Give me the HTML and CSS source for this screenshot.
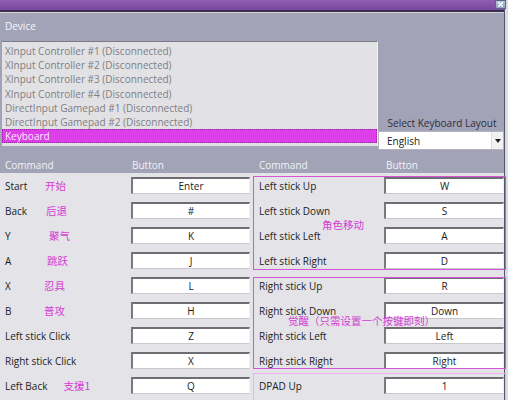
FILE: index.html
```html
<!DOCTYPE html>
<html>
<head>
<meta charset="utf-8">
<title>Controller Settings</title>
<link rel="stylesheet" href="styles.css">
</head>
<body>
<div class="app">
  <div class="titlebar">
    <span class="close">
      <svg width="10" height="9" viewBox="0 0 10 9"><path d="M2.5 2 L7.5 7 M7.5 2 L2.5 7" stroke="#ffffff" stroke-width="1.4" fill="none"/></svg>
    </span>
  </div>
  <div class="device-head">Device</div>
  <div class="device-row">
    <div class="listbox">
      <div class="item">XInput Controller #1 (Disconnected)</div>
      <div class="item">XInput Controller #2 (Disconnected)</div>
      <div class="item">XInput Controller #3 (Disconnected)</div>
      <div class="item">XInput Controller #4 (Disconnected)</div>
      <div class="item">DirectInput Gamepad #1 (Disconnected)</div>
      <div class="item">DirectInput Gamepad #2 (Disconnected)</div>
      <div class="item selected">Keyboard</div>
    </div>
    <div class="layout-panel">
      <div class="layout-label">Select Keyboard Layout</div>
      <div class="select"><span class="select-value">English</span><span class="arrow"><span class="tri"></span></span></div>
    </div>
  </div>
  <div class="grid-head">
    <div class="head-half left-half"><span class="hc">Command</span><span class="hb">Button</span></div>
    <div class="head-half right-half"><span class="hc">Command</span><span class="hb">Button</span></div>
  </div>
  <div class="grid">
    <div class="col col-left">
      <div class="row"><div class="cmd"><span class="name">Start</span><span class="note">开始</span></div><div class="key">Enter</div></div>
      <div class="row"><div class="cmd"><span class="name">Back</span><span class="note n-back">后退</span></div><div class="key">#</div></div>
      <div class="row"><div class="cmd"><span class="name">Y</span><span class="note n-y">聚气</span></div><div class="key">K</div></div>
      <div class="row"><div class="cmd"><span class="name">A</span><span class="note n-a">跳跃</span></div><div class="key">J</div></div>
      <div class="row"><div class="cmd"><span class="name">X</span><span class="note n-x">忍具</span></div><div class="key">L</div></div>
      <div class="row"><div class="cmd"><span class="name">B</span><span class="note n-x">普攻</span></div><div class="key">H</div></div>
      <div class="row"><div class="cmd"><span class="name">Left stick Click</span></div><div class="key">Z</div></div>
      <div class="row"><div class="cmd"><span class="name">Right stick Click</span></div><div class="key">X</div></div>
      <div class="row"><div class="cmd"><span class="name">Left Back</span><span class="note n-lb">支援1</span></div><div class="key">Q</div></div>
    </div>
    <div class="col col-right">
      <div class="group g1">
        <div class="row"><div class="cmd">Left stick Up</div><div class="key">W</div></div>
        <div class="row"><div class="cmd">Left stick Down</div><div class="key">S</div></div>
        <div class="row"><div class="cmd">Left stick Left</div><div class="key">A</div></div>
        <div class="row"><div class="cmd">Left stick Right</div><div class="key">D</div></div>
        <span class="gnote gn1">角色移动</span>
      </div>
      <div class="group g2">
        <div class="row"><div class="cmd">Right stick Up</div><div class="key">R</div></div>
        <div class="row"><div class="cmd">Right stick Down</div><div class="key">Down</div></div>
        <div class="row"><div class="cmd">Right stick Left</div><div class="key">Left</div></div>
        <div class="row"><div class="cmd">Right stick Right</div><div class="key">Right</div></div>
        <span class="gnote gn2">觉醒（只需设置一个按键即刻）</span>
      </div>
      <div class="group g3">
        <div class="row"><div class="cmd">DPAD Up</div><div class="key">1</div></div>
      </div>
    </div>
  </div>
</div>
</body>
</html>
```

FILE: styles.css
```css
* { box-sizing: border-box; }
html, body { margin: 0; padding: 0; }
body {
  width: 508px;
  height: 400px;
  overflow: hidden;
  background: #dcdce4;
  font-family: "Open Sans", "Noto Sans CJK SC", sans-serif;
  font-size: 10px;
}
.app {
  width: 505px;
  height: 400px;
  background: #a3a3b7;
  border-right: 1px solid #55556a;
}
.titlebar {
  height: 12px;
  background: linear-gradient(#9160b3, #7747a0);
  border-bottom: 2px solid #3b2e4e;
  display: flex;
  justify-content: flex-end;
  align-items: flex-start;
}
.close {
  width: 11px;
  height: 9px;
  margin-right: -2px;
  background: linear-gradient(#b8c8de, #8ea2c2);
  border: 1px solid #5a6684;
  display: flex;
  align-items: center;
  justify-content: center;
}
.close svg { display: block; }
.device-head {
  border-top: 1px solid #d2d2dc;
  padding: 6px 5px 8px;
  line-height: 14px;
  color: #f6f6fa;
}
.device-row {
  display: flex;
  align-items: flex-start;
}
.listbox {
  margin-left: 2px;
  width: 376px;
  background: #e2e2e5;
  border-top: 1px solid #7c7c88;
  border-right: 1px solid #f4f4f6;
  padding: 2px 0 3px;
}
.item {
  height: 14.2px;
  line-height: 14.2px;
  padding-left: 3px;
  color: #7e7e84;
  white-space: nowrap;
}
.item.selected {
  background: #dc3fe7;
  color: #fbeafb;
  outline: 1px dotted #9a1eaa;
  outline-offset: -1px;
}
.layout-panel {
  flex: 1;
  padding-top: 75px;
  text-align: center;
}
.layout-label {
  line-height: 14px;
  color: #2e2e3a;
  padding-left: 2px;
}
.select {
  margin-top: 1px;
  height: 19px;
  background: #ffffff;
  border: 1px solid #b4b4bc;
  display: flex;
  align-items: center;
  text-align: left;
  color: #1c1c1c;
}
.select-value { padding-left: 8px; }
.arrow {
  margin-left: auto;
  width: 12px;
  height: 17px;
  background: #f2f2f2;
  border-left: 1px solid #dcdcdc;
  display: flex;
  align-items: center;
  justify-content: center;
}
.tri {
  width: 0;
  height: 0;
  border-left: 3px solid transparent;
  border-right: 3px solid transparent;
  border-top: 4px solid #1e1e1e;
}
.grid-head {
  display: flex;
  height: 23px;
  padding-top: 8px;
  line-height: 14px;
  color: #f2f2f6;
}
.head-half { display: flex; }
.head-half.left-half { width: 251px; }
.head-half.left-half .hc { width: 131px; padding-left: 5px; }
.head-half.left-half .hb { padding-left: 1px; }
.head-half.right-half { width: 253px; }
.head-half.right-half .hc { width: 133px; padding-left: 8px; }
.head-half.right-half .hb { padding-left: 2px; }
.grid {
  display: flex;
  height: 227px;
  background: #e4e4e8;
}
.col-left { width: 251px; }
.col-right { width: 253px; }
.row {
  display: flex;
  align-items: center;
  height: 25px;
}
.cmd {
  display: flex;
  align-items: center;
  color: #1c1c1c;
  white-space: nowrap;
}
.col-left .cmd { width: 131px; padding-left: 5px; }
.col-right .cmd { width: 133px; padding-left: 8px; }
.name { min-width: 40px; }
.note {
  color: #d23cd2;
  font-family: "Noto Sans CJK SC", sans-serif;
  font-size: 10.5px;
  line-height: 12px;
}
.note.n-back { margin-left: 1px; }
.note.n-y { margin-left: 4px; }
.note.n-a { margin-left: 2px; }
.note.n-x { margin-left: -1px; }
.note.n-lb { margin-left: 16px; }
.key {
  height: 17px;
  background: #ffffff;
  border-top: 2px solid #6e6e72;
  border-left: 2px solid #7a7a7e;
  border-bottom: 1px solid #c8c8cc;
  border-right: 1px solid #f0f0f0;
  text-align: center;
  line-height: 14px;
  color: #1c1c1c;
}
.col-left .key { width: 119px; }
.col-right .key { width: 120px; }
.group { position: relative; }
.group::after {
  content: "";
  position: absolute;
  left: 2px;
  right: -2px;
  top: 3px;
  bottom: 3px;
  border: 1px solid #d655d6;
  pointer-events: none;
}
.group.g2::after { top: 4px; bottom: 4px; }
.group.g3::after { top: 0; bottom: -4px; border-color: #eab6ea; }
.gnote {
  position: absolute;
  color: #d23cd2;
  font-family: "Noto Sans CJK SC", sans-serif;
  font-size: 10.5px;
  line-height: 12px;
  white-space: nowrap;
}
.gn1 { left: 71px; top: 46px; }
.gn2 { left: 37px; top: 42px; }
```
